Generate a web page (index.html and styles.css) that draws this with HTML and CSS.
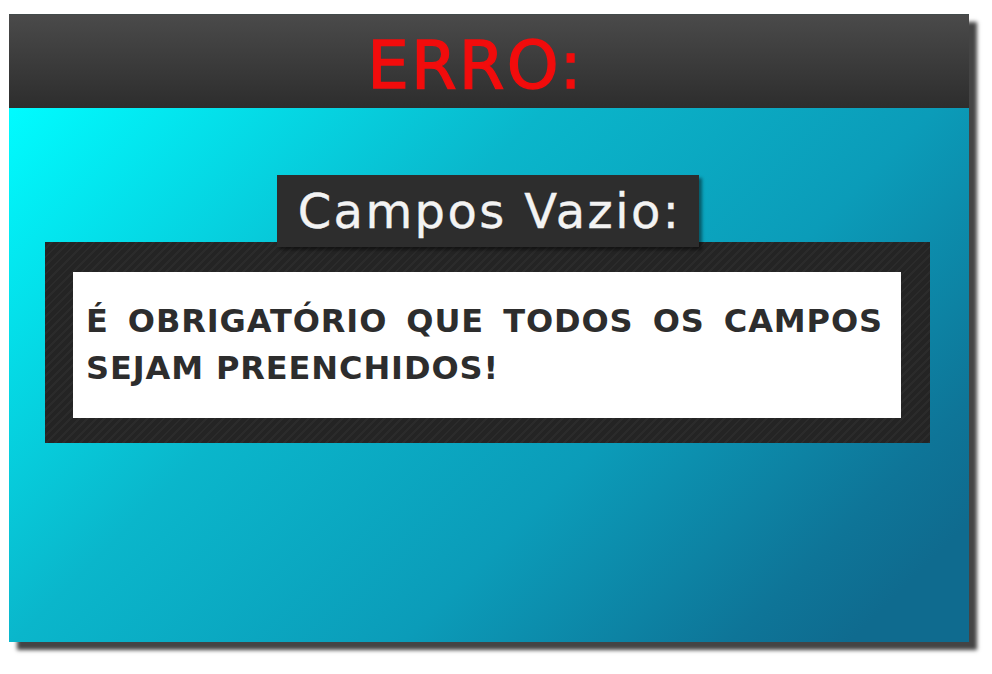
FILE: index.html
```html
<!DOCTYPE html>
<html lang="pt">
<head>
<meta charset="utf-8">
<title>Erro</title>
<link rel="stylesheet" href="styles.css">
</head>
<body>
<div class="page">
  <div class="card">
    <div class="header"><h1 class="header-title">ERRO:</h1></div>
    <div class="content">
      <div class="label-row"><h2 class="label">Campos Vazio:</h2></div>
      <div class="frame">
        <div class="message">
          <p class="message-text">É OBRIGATÓRIO QUE TODOS OS CAMPOS SEJAM PREENCHIDOS!</p>
        </div>
      </div>
    </div>
  </div>
</div>
</body>
</html>
```
FILE: styles.css
```css
html, body {
  margin: 0;
  padding: 0;
  background: #ffffff;
}
body {
  font-family: "DejaVu Sans", "Liberation Sans", sans-serif;
}
.page {
  padding: 14px 0 32px 9px;
  min-height: 674px;
  box-sizing: border-box;
}
.card {
  width: 960px;
  box-shadow: 8px 8px 4px #444444;
}
.header {
  height: 94px;
  box-sizing: border-box;
  padding: 8px 27px 0 0;
  background: linear-gradient(to bottom, #4a4a4a 0%, #2d2d2d 100%);
  border-top: 1px solid #424a4a;
  text-align: center;
}
.header-title {
  margin: 0;
  font-size: 66px;
  line-height: 85px;
  font-weight: normal;
  color: #f20c0c;
  letter-spacing: 2px;
  -webkit-text-stroke: 1.3px #f20c0c;
}
.content {
  height: 534px;
  box-sizing: border-box;
  padding: 67px 39px 0 36px;
  background: linear-gradient(135deg, #00fcff 0%, #0ab6cb 36%, #0b9cb9 62%, #0e7598 84%, #0f6b8f 92%, #0f6b8f 100%);
}
.label-row {
  display: flex;
  justify-content: center;
  position: relative;
  z-index: 2;
  padding-left: 1px;
}
.label {
  margin: 0;
  height: 72px;
  box-sizing: border-box;
  padding: 0 18px 0 21px;
  background: #2d2d2d;
  color: #f3f3f3;
  font-size: 48px;
  line-height: 72px;
  font-weight: normal;
  letter-spacing: 2.4px;
  -webkit-text-stroke: 0.4px #f3f3f3;
  box-shadow: 3px 3px 3px rgba(0, 0, 0, 0.45);
  white-space: nowrap;
}
.frame {
  margin-top: -5px;
  padding: 30px 29px 25px 28px;
  background: repeating-linear-gradient(135deg, #242424 0px, #242424 4px, #2b2b2b 4px, #2b2b2b 6px);
  position: relative;
  z-index: 1;
}
.message {
  background: #ffffff;
  padding: 26px 18px 26px 13px;
}
.message-text {
  margin: 0;
  font-size: 32px;
  line-height: 47px;
  font-weight: bold;
  color: #2d2d2d;
  text-align: justify;
  letter-spacing: 0.9px;
}
```
